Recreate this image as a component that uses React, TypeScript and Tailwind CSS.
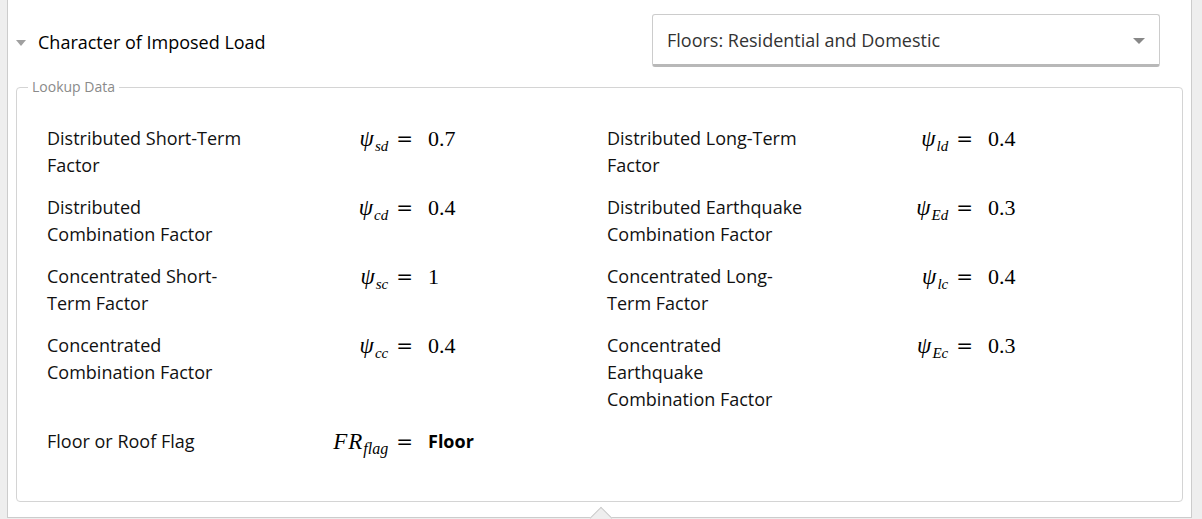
import type { ReactNode } from "react";

type Row = {
  label: string;
  sym: string;
  sub: string;
  value: string;
};

const left: Row[] = [
  { label: "Distributed Short-Term Factor", sym: "ψ", sub: "sd", value: "0.7" },
  { label: "Distributed Combination Factor", sym: "ψ", sub: "cd", value: "0.4" },
  { label: "Concentrated Short-Term Factor", sym: "ψ", sub: "sc", value: "1" },
  { label: "Concentrated Combination Factor", sym: "ψ", sub: "cc", value: "0.4" },
];

const right: Row[] = [
  { label: "Distributed Long-Term Factor", sym: "ψ", sub: "ld", value: "0.4" },
  { label: "Distributed Earthquake Combination Factor", sym: "ψ", sub: "Ed", value: "0.3" },
  { label: "Concentrated Long-Term Factor", sym: "ψ", sub: "lc", value: "0.4" },
  { label: "Concentrated Earthquake Combination Factor", sym: "ψ", sub: "Ec", value: "0.3" },
];

const Eq = ({ sym, sub }: { sym: string; sub: string }) => (
  <div className="text-right font-['Liberation_Serif',serif] text-[21px] leading-[27px] text-black">
    <span className="text-[23px] italic tracking-[1px]">{sym}</span>
    <span className="relative top-[5px] text-[15px] italic">{sub}</span>
    <span className="ml-[8px] font-['DejaVu_Serif',serif] text-[20px]">=</span>
  </div>
);

const Value = ({ children }: { children: ReactNode }) => (
  <div className="pl-[15px] font-['Liberation_Serif',serif] text-[22px] leading-[27px] text-black">
    {children}
  </div>
);

const Label = ({ children }: { children: ReactNode }) => (
  <div className="text-[18px] leading-[27px] text-[#111]">{children}</div>
);

const App = () => {
  return (
    <div className="h-[519px] overflow-hidden bg-[#eeeeee] pl-[7px] pr-[10px] font-['Open_Sans',sans-serif]">
      <div className="relative h-[518px] border-x border-b border-[#cccccc] bg-white">
        <div className="flex items-center pt-[14px] pr-[31px]">
          <div className="mt-[4px] flex flex-1 items-center pl-[8px]">
            <span className="h-0 w-0 border-x-[5px] border-t-[6px] border-x-transparent border-t-[#a0a0a0]" />
            <span className="ml-[12px] text-[18px] text-black">Character of Imposed Load</span>
          </div>
          <div className="flex h-[53px] w-[508px] items-center justify-between rounded-[3px] border border-b-[3px] border-[#cccccc] border-b-[#b8b8b8] pt-[2px] pl-[14px] pr-[14px]">
            <span className="text-[18px] text-[#333]">Floors: Residential and Domestic</span>
            <span className="h-0 w-0 border-x-[6px] border-t-[6px] border-x-transparent border-t-[#888]" />
          </div>
        </div>

        <fieldset className="mx-[8px] mt-[11px] h-[424px] rounded-[4px] border border-[#d4d4d4] px-0 pt-[29px]">
          <legend className="ml-[11px] px-[4px] text-[14px] leading-[18px] text-[#8a8a8a]">Lookup Data</legend>
          <div className="grid grid-cols-[200px_166px_194px_200px_166px_1fr] gap-y-[15px] pl-[30px]">
            {left.map((l, i) => {
              const r = right[i];
              return (
                <div key={l.sub} className="contents">
                  <Label>{l.label}</Label>
                  <Eq sym={l.sym} sub={l.sub} />
                  <Value>{l.value}</Value>
                  <Label>{r.label}</Label>
                  <Eq sym={r.sym} sub={r.sub} />
                  <Value>{r.value}</Value>
                </div>
              );
            })}
            <Label>Floor or Roof Flag</Label>
            <div className="text-right font-['Liberation_Serif',serif] leading-[27px] text-black">
              <span className="text-[23px] italic tracking-[1px]">FR</span>
              <span className="relative top-[5px] text-[16px] italic">flag</span>
              <span className="ml-[8px] font-['DejaVu_Serif',serif] text-[20px]">=</span>
            </div>
            <div className="pl-[15px] text-[18px] font-bold leading-[27px] text-black">Floor</div>
          </div>
        </fieldset>

        <div className="absolute bottom-[-9px] left-[585px] h-[16px] w-[16px] rotate-45 border-l border-t border-[#cccccc] bg-[#eeeeee]" />
      </div>
    </div>
  );
};

export default App;
